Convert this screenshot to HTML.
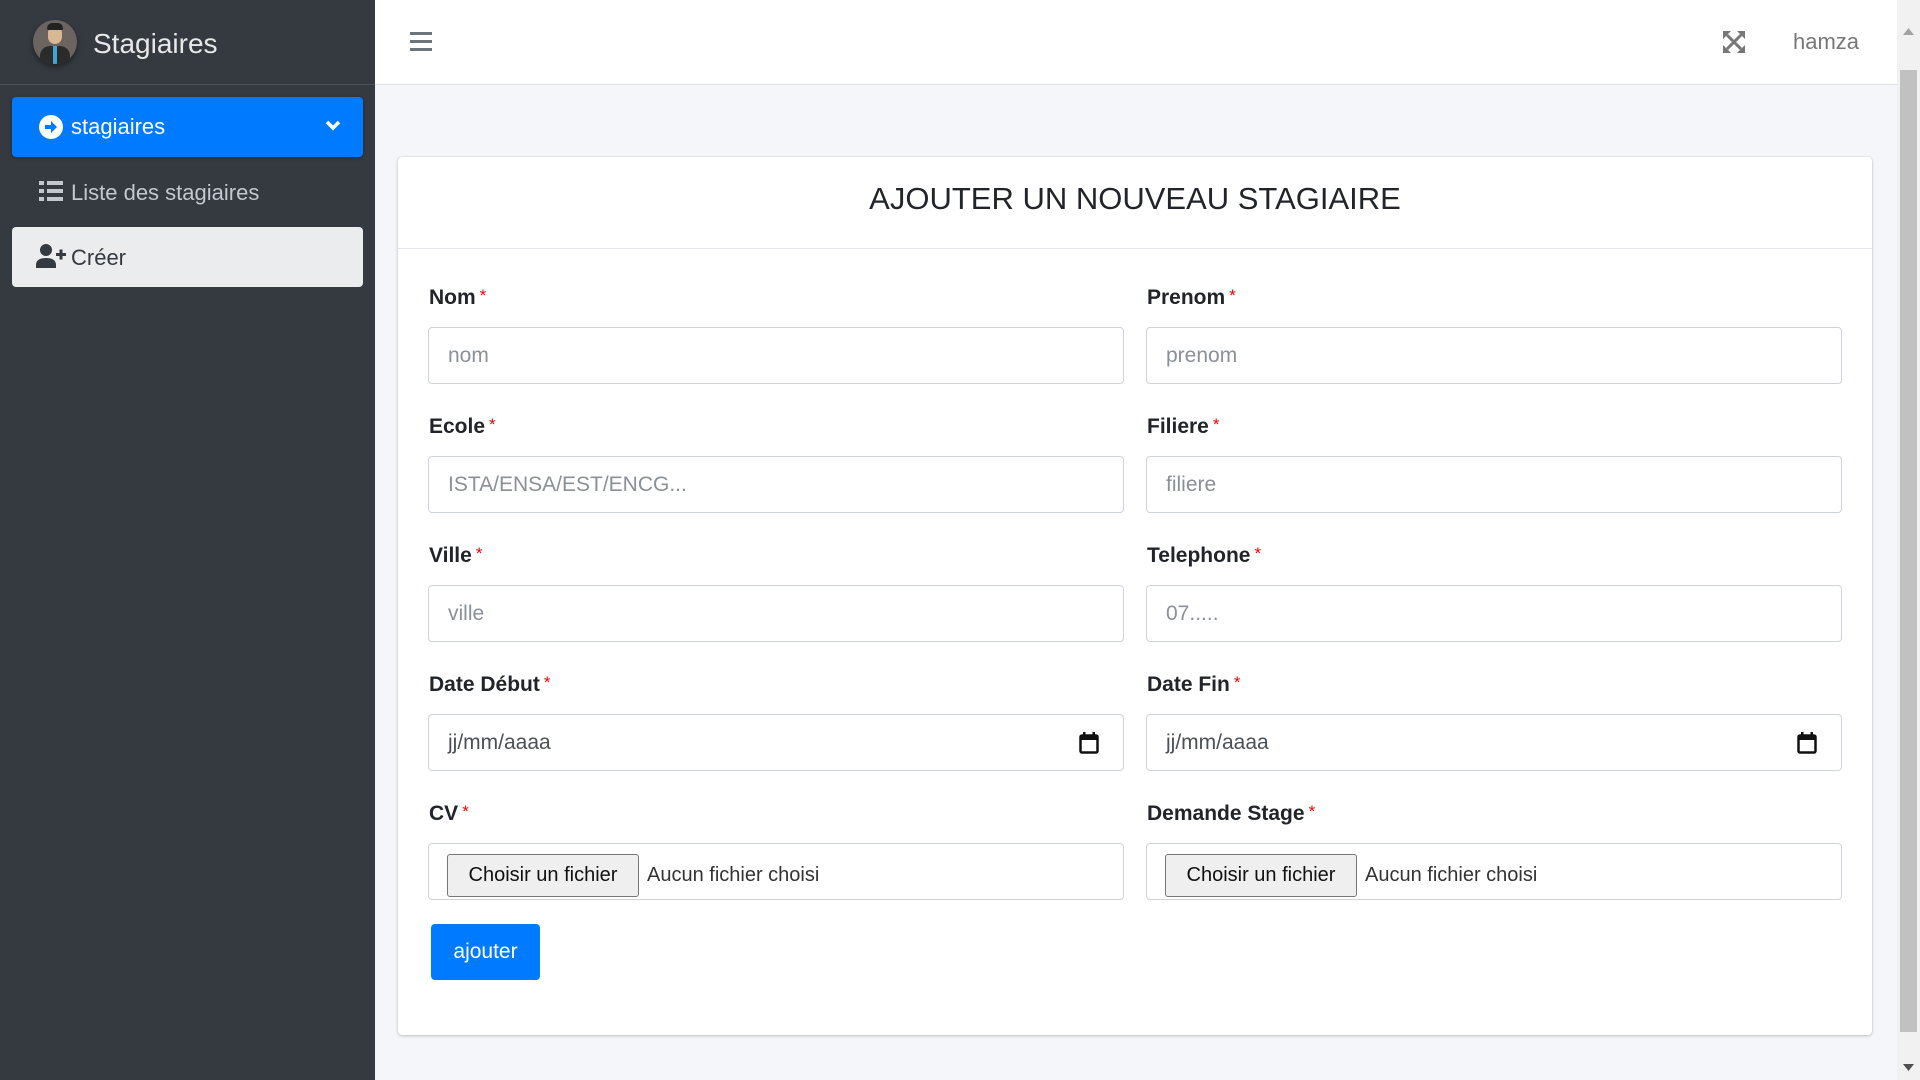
<!DOCTYPE html>
<html><head><meta charset="utf-8"><style>
*{box-sizing:border-box;margin:0;padding:0}
body{width:1920px;height:1080px;overflow:hidden;background:#f4f6f9;font-family:"Liberation Sans",sans-serif;position:relative}
.abs{position:absolute}
.side{left:0;top:0;width:375px;height:1080px;background:#343a40}
.nav{left:375px;top:0;width:1522px;height:85px;background:#fff;border-bottom:1px solid #dee2e6}
.card{left:398px;top:157px;width:1474px;height:878px;background:#fff;border-radius:4px;box-shadow:0 0 1px rgba(0,0,0,.2),0 1px 3px rgba(0,0,0,.2)}
.lbl{font-weight:bold;font-size:21px;color:#212529;margin-top:2px}
.lbl b{color:#e00;font-weight:normal;font-size:17px;vertical-align:top;margin-left:4px}
.inp{height:57px;border:1px solid #ced4da;border-radius:4px;background:#fff;font-size:21px;color:#8a9097;padding-left:19px;line-height:55px}
.fb{position:absolute;left:18px;top:10px;height:43px;width:192px;background:#efefef;border:1px solid #767676;border-radius:3px;color:#111;font-size:20px;line-height:41px;text-align:center}
.fn{position:absolute;left:218px;top:4px;line-height:55px;color:#333;font-size:20px}
</style></head><body>
<div class="abs side">
  <div class="abs" style="left:33px;top:20px;width:44px;height:44px;border-radius:50%;background:#6b6461;box-shadow:0 3px 6px rgba(0,0,0,.4);overflow:hidden">
    <div class="abs" style="left:15px;top:6px;width:14px;height:18px;border-radius:7px;background:#d8b894"></div>
    <div class="abs" style="left:14px;top:3px;width:16px;height:7px;border-radius:6px 6px 2px 2px;background:#222"></div>
    <div class="abs" style="left:7px;top:26px;width:30px;height:20px;border-radius:10px 10px 0 0;background:#2b2b2b"></div>
    <div class="abs" style="left:20px;top:26px;width:4px;height:18px;background:#3aa7d8"></div>
  </div>
  <div class="abs" style="left:93px;top:28px;font-size:28px;color:#e8e8e8">Stagiaires</div>
  <div class="abs" style="left:0;top:84px;width:375px;height:1px;background:#4b545c"></div>
  <div class="abs" style="left:12px;top:97px;width:351px;height:60px;background:#007bff;border-radius:4px;box-shadow:0 1px 3px rgba(0,0,0,.3)">
    <svg class="abs" style="left:27px;top:18px" width="24" height="24" viewBox="0 0 24 24"><circle cx="12" cy="12" r="12" fill="#fff"/><path d="M6 10h6V6l6 6-6 6v-4H6z" fill="#007bff"/></svg>
    <div class="abs" style="left:59px;top:17px;font-size:22px;color:#fff">stagiaires</div>
    <svg class="abs" style="left:313px;top:23px" width="16" height="12" viewBox="0 0 16 12"><path d="M2 2l6 6 6-6" stroke="#fff" stroke-width="3.5" fill="none"/></svg>
  </div>
  <svg class="abs" style="left:39px;top:181px" width="24" height="20" viewBox="0 0 24 20"><g fill="#c2c7d0"><rect x="0" y="0" width="5" height="4"/><rect x="0" y="8" width="5" height="4"/><rect x="0" y="16" width="5" height="4"/><rect x="8" y="0" width="16" height="4"/><rect x="8" y="8" width="16" height="4"/><rect x="8" y="16" width="16" height="4"/></g></svg>
  <div class="abs" style="left:71px;top:180px;font-size:22px;color:#c2c7d0">Liste des stagiaires</div>
  <div class="abs" style="left:12px;top:227px;width:351px;height:60px;background:#ebeced;border-radius:4px">
    <svg class="abs" style="left:24px;top:17px" width="30" height="24" viewBox="0 0 30 24"><g fill="#343a40"><circle cx="10" cy="6" r="6"/><path d="M0 24v-3c0-5 4-7 10-7s10 2 10 7v3z"/><rect x="20" y="9" width="10" height="3"/><rect x="23.5" y="5.5" width="3" height="10"/></g></svg>
    <div class="abs" style="left:59px;top:18px;font-size:22px;color:#343a40">Créer</div>
  </div>
</div>
<div class="abs nav">
  <svg class="abs" style="left:35px;top:32px" width="22" height="19" viewBox="0 0 22 19"><g fill="#6c757d"><rect y="0" width="22" height="3"/><rect y="8" width="22" height="3"/><rect y="16" width="22" height="3"/></g></svg>
  <svg class="abs" style="left:1348px;top:31px" width="22" height="22" viewBox="0 0 22 22"><g stroke="#777" stroke-width="3" fill="#777"><path d="M4 4l14 14M18 4L4 18" fill="none"/><path d="M0 0h8L0 8z" stroke="none"/><path d="M22 0h-8l8 8z" stroke="none"/><path d="M0 22h8L0 14z" stroke="none"/><path d="M22 22h-8l8-8z" stroke="none"/></g></svg>
  <div class="abs" style="left:1418px;top:29px;font-size:22px;color:#777">hamza</div>
</div>
<div class="abs" style="left:1897px;top:0;width:23px;height:1080px;background:#f1f1f1">
  <div class="abs" style="left:3px;top:70px;width:17px;height:962px;background:#c1c1c1"></div>
  <svg class="abs" style="left:6px;top:28px" width="11" height="7"><path d="M0 7L5.5 0 11 7z" fill="#a3a3a3"/></svg>
  <svg class="abs" style="left:6px;top:1064px" width="11" height="7"><path d="M0 0L5.5 7 11 0z" fill="#505050"/></svg>
</div>
<div class="abs card">
  <div class="abs" style="left:0;top:0;width:1474px;height:92px;border-bottom:1px solid #e3e6e9;text-align:center;font-size:31px;color:#212529;line-height:84px">AJOUTER UN NOUVEAU STAGIAIRE</div>
</div>
<div class="abs lbl" style="left:429px;top:284px">Nom<b>*</b></div>
<div class="abs inp" style="left:428px;top:327px;width:696px">nom</div>
<div class="abs lbl" style="left:1147px;top:284px">Prenom<b>*</b></div>
<div class="abs inp" style="left:1146px;top:327px;width:696px">prenom</div>

<div class="abs lbl" style="left:429px;top:413px">Ecole<b>*</b></div>
<div class="abs inp" style="left:428px;top:456px;width:696px">ISTA/ENSA/EST/ENCG...</div>
<div class="abs lbl" style="left:1147px;top:413px">Filiere<b>*</b></div>
<div class="abs inp" style="left:1146px;top:456px;width:696px">filiere</div>

<div class="abs lbl" style="left:429px;top:542px">Ville<b>*</b></div>
<div class="abs inp" style="left:428px;top:585px;width:696px">ville</div>
<div class="abs lbl" style="left:1147px;top:542px">Telephone<b>*</b></div>
<div class="abs inp" style="left:1146px;top:585px;width:696px">07.....</div>

<div class="abs lbl" style="left:429px;top:671px">Date Début<b>*</b></div>
<div class="abs inp" style="left:428px;top:714px;width:696px;color:#495057">jj/mm/aaaa
  <svg class="abs" style="left:650px;top:17px" width="20" height="22" viewBox="0 0 20 22"><rect x="1.5" y="3.5" width="17" height="17" rx="1.5" fill="none" stroke="#111" stroke-width="2.5"/><rect x="1" y="3" width="18" height="5" fill="#111"/><rect x="4" y="0" width="2.5" height="4" fill="#111"/><rect x="13.5" y="0" width="2.5" height="4" fill="#111"/></svg>
</div>
<div class="abs lbl" style="left:1147px;top:671px">Date Fin<b>*</b></div>
<div class="abs inp" style="left:1146px;top:714px;width:696px;color:#495057">jj/mm/aaaa
  <svg class="abs" style="left:650px;top:17px" width="20" height="22" viewBox="0 0 20 22"><rect x="1.5" y="3.5" width="17" height="17" rx="1.5" fill="none" stroke="#111" stroke-width="2.5"/><rect x="1" y="3" width="18" height="5" fill="#111"/><rect x="4" y="0" width="2.5" height="4" fill="#111"/><rect x="13.5" y="0" width="2.5" height="4" fill="#111"/></svg>
</div>

<div class="abs lbl" style="left:429px;top:800px">CV<b>*</b></div>
<div class="abs inp" style="left:428px;top:843px;width:696px;padding:0"><div class="fb">Choisir un fichier</div><div class="fn">Aucun fichier choisi</div></div>
<div class="abs lbl" style="left:1147px;top:800px">Demande Stage<b>*</b></div>
<div class="abs inp" style="left:1146px;top:843px;width:696px;padding:0"><div class="fb">Choisir un fichier</div><div class="fn">Aucun fichier choisi</div></div>

<div class="abs" style="left:431px;top:924px;width:109px;height:56px;background:#007bff;border-radius:4px;color:#fff;font-size:21px;line-height:56px;text-align:center">ajouter</div>
</body></html>
